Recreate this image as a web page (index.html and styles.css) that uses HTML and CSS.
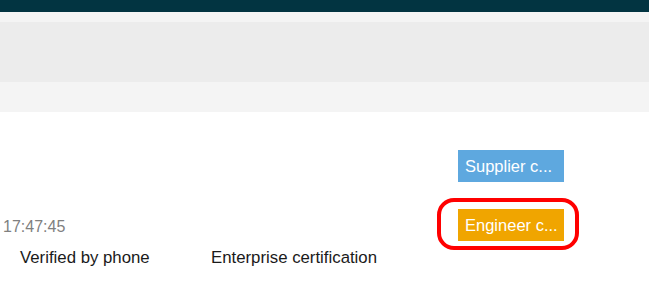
FILE: index.html
```html
<!DOCTYPE html>
<html lang="en">
<head>
    <meta charset="UTF-8">
    <title>Certification</title>
    <link rel="stylesheet" href="styles.css">
</head>
<body>
    <div class="topbar"></div>
    <div class="strip">
        <div class="strip-inner"></div>
    </div>

    <div class="content">
        <div class="row row-first">
            <span></span>
            <div class="tag tag-blue">Supplier c...</div>
        </div>
        <div class="row">
            <span class="time">17:47:45</span>
            <div class="ring">
                <div class="tag tag-orange">Engineer c...</div>
            </div>
        </div>
        <div class="certs">
            <span class="cert">Verified by phone</span>
            <span class="cert">Enterprise certification</span>
        </div>
    </div>
</body>
</html>
```
FILE: styles.css
```css
body {
    margin: 0;
    font-family: "Liberation Sans", Arial, sans-serif;
    background-color: #ffffff;
    color: #1a1a1a;
}
.topbar {
    height: 12px;
    background-color: #023441;
}
.strip {
    background-color: #f4f4f4;
    padding: 10px 0 30px;
}
.strip-inner {
    height: 60px;
    background-color: #ececec;
}
.content {
    padding-top: 38px;
}
.row {
    display: flex;
    justify-content: space-between;
    align-items: center;
    padding-right: 85px;
}
.row-first {
    margin-bottom: 27px;
}
.tag {
    width: 106px;
    height: 32px;
    line-height: 32px;
    box-sizing: border-box;
    padding: 0 7px;
    color: #ffffff;
    font-size: 16.5px;
    white-space: nowrap;
    overflow: hidden;
}
.tag-blue {
    background-color: #5ea8df;
}
.tag-orange {
    background-color: #f0a500;
}
.ring {
    position: relative;
}
.ring::after {
    content: "";
    position: absolute;
    top: -11px;
    right: -15px;
    bottom: -9px;
    left: -21px;
    border: 4px solid #ff0000;
    border-radius: 17px;
}
.time {
    padding-left: 3px;
    padding-top: 4px;
    font-size: 16px;
    color: #808080;
}
.certs {
    display: flex;
    padding-left: 20px;
    margin-top: 7px;
    font-size: 16.8px;
    line-height: 20px;
}
.cert {
    width: 191px;
}
```
